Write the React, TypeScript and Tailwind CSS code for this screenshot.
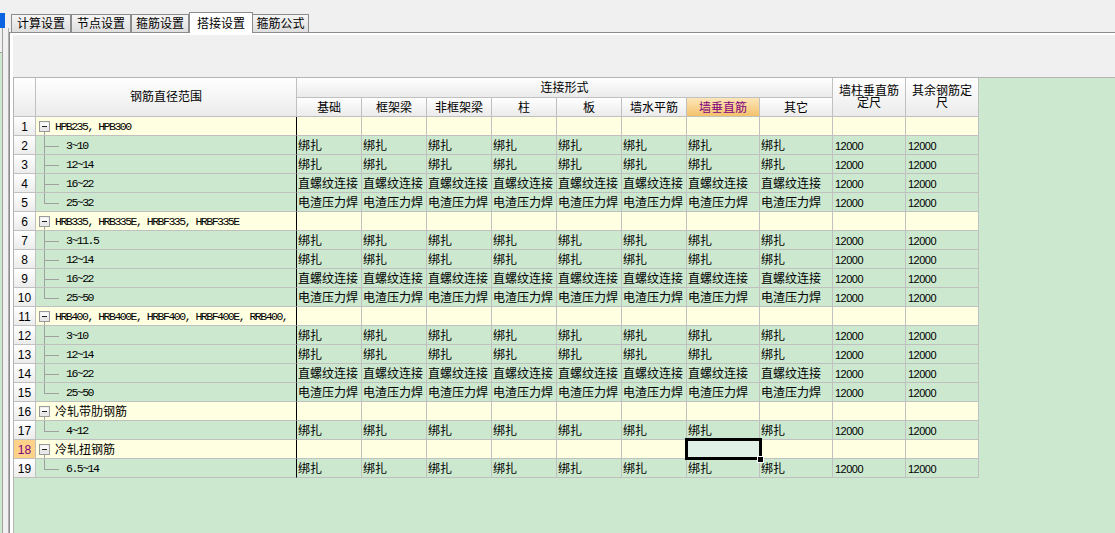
import React from 'react';

type Row =
  | { kind: 'p'; label: string }
  | { kind: 'c'; label: string; vals: string[]; last: boolean };

const groups: { label: string; children: string[] }[] = [
  { label: 'HPB235, HPB300', children: ['3~10', '12~14', '16~22', '25~32'] },
  { label: 'HRB335, HRB335E, HRBF335, HRBF335E', children: ['3~11.5', '12~14', '16~22', '25~50'] },
  { label: 'HRB400, HRB400E, HRBF400, HRBF400E, RRB400,', children: ['3~10', '12~14', '16~22', '25~50'] },
  { label: '冷轧带肋钢筋', children: ['4~12'] },
  { label: '冷轧扭钢筋', children: ['6.5~14'] },
];

function buildRows(): Row[] {
  const out: Row[] = [];
  for (const g of groups) {
    out.push({ kind: 'p', label: g.label });
    g.children.forEach((c, i) => {
      let v = '绑扎';
      if (g.children.length === 4 && i === 2) v = '直螺纹连接';
      if (g.children.length === 4 && i === 3) v = '电渣压力焊';
      out.push({
        kind: 'c',
        label: c,
        vals: [v, v, v, v, v, v, v, v, '12000', '12000'],
        last: i === g.children.length - 1,
      });
    });
  }
  return out;
}

const rows = buildRows();
const subHeads = ['基础', '框架梁', '非框架梁', '柱', '板', '墙水平筋', '墙垂直筋', '其它'];

const hdr = 'bg-linear-to-b from-white to-[#ebebeb] border-r border-b border-[#c0c0c0]';
const mono = "font-['Liberation_Mono',monospace] text-[11.5px] tracking-[-1.5px]";

function MinusBox() {
  return (
    <svg width="19" height="18" className="shrink-0">
      <line x1="8.5" y1="15" x2="8.5" y2="18" stroke="#a0a0a0" />
      <rect x="3.5" y="4.5" width="10" height="10" fill="#e8e8e8" stroke="#9a9a9a" />
      <rect x="4.5" y="5.5" width="8" height="4" fill="#fafafa" />
      <line x1="6" y1="9.5" x2="11" y2="9.5" stroke="#202020" />
    </svg>
  );
}

function TreeLine({ last }: { last: boolean }) {
  return (
    <svg width="30" height="18" className="shrink-0">
      <line x1="8.5" y1="0" x2="8.5" y2={last ? 10 : 18} stroke="#a0a0a0" />
      <line x1="8" y1="10.5" x2="23" y2="10.5" stroke="#a0a0a0" />
    </svg>
  );
}

export default function App() {
  return (
    <div className="w-[1115px] h-[533px] overflow-hidden flex bg-[#f0f0f0] text-black font-['Liberation_Sans','Noto_Sans_CJK_SC',sans-serif] text-[12px]">
      {/* left strip */}
      <div className="w-[9px] shrink-0 flex flex-col">
        <div className="h-[13px]" />
        <div className="w-[5px] h-[15px] bg-[#0a63e0]" />
        <div className="flex-1 flex">
          <div className="w-[3px] flex flex-col border-r border-[#a0a0a0]">
            <div className="h-[24px] bg-[#f0f0f0]" />
            <div className="flex-1 bg-[#cce8cf] border-t border-[#a0a0a0]" />
          </div>
          <div className="flex-1 border-r border-[#b0b0b0]" />
        </div>
      </div>

      {/* main */}
      <div className="flex-1 flex flex-col min-w-0">
        {/* tabs */}
        <div className="h-[32px] flex items-end pl-[2px] shrink-0">
          {[
            ['计算设置', 60],
            ['节点设置', 60],
            ['箍筋设置', 58],
          ].map(([t, w]) => (
            <div
              key={t as string}
              style={{ width: w as number }}
              className="h-[18px] border border-b-0 border-[#8c8c8c] bg-linear-to-b from-[#f6f6f6] to-[#dedede] flex items-center justify-center pt-[1px]"
            >
              {t}
            </div>
          ))}
          <div className="w-[64px] h-[21px] -mb-px relative z-10 border border-b-0 border-[#8c8c8c] bg-white flex items-start justify-center pt-[2px]">
            搭接设置
          </div>
          <div className="w-[56px] h-[18px] border border-b-0 border-l-0 border-[#8c8c8c] bg-linear-to-b from-[#f6f6f6] to-[#dedede] flex items-center justify-center pt-[1px]">
            箍筋公式
          </div>
        </div>

        {/* panel */}
        <div className="flex-1 flex flex-col border-l border-t border-[#8c8c8c] min-h-0">
          <div className="flex-1 flex flex-col border-l-[3px] border-t-2 border-white min-h-0">
            <div className="h-[42px] shrink-0 bg-[#f0f0f0]" />
            <div className="flex-1 bg-[#cce8cf] border-l border-t border-[#b4b4b4] min-h-0">
              <div className="grid w-max grid-cols-[22px_261px_65px_65px_65px_65px_65px_65px_73px_73px_73px_73px] grid-rows-[20px_19px_repeat(19,19px)]">
                {/* header */}
                <div className={`row-span-2 ${hdr}`} />
                <div className={`row-span-2 ${hdr} flex items-center justify-center`}>钢筋直径范围</div>
                <div className={`col-span-8 ${hdr} flex items-center justify-center pt-[1px]`}>连接形式</div>
                <div className={`row-span-2 ${hdr} flex items-center justify-center text-center leading-[12px] pb-[1px]`}>
                  墙柱垂直筋
                  <br />
                  定尺
                </div>
                <div className={`row-span-2 ${hdr} flex items-center justify-center text-center leading-[12px] pb-[1px]`}>
                  其余钢筋定
                  <br />
                  尺
                </div>
                {subHeads.map((h) =>
                  h === '墙垂直筋' ? (
                    <div
                      key={h}
                      className="bg-linear-to-b from-[#fde6b8] to-[#f3c26a] border-r border-b border-[#c0c0c0] flex items-center justify-center text-[#800080] pt-[1px]"
                    >
                      {h}
                    </div>
                  ) : (
                    <div key={h} className={`${hdr} flex items-center justify-center pt-[1px]`}>
                      {h}
                    </div>
                  )
                )}

                {/* body */}
                {rows.map((r, idx) => {
                  const n = idx + 1;
                  const bg = r.kind === 'p' ? 'bg-[#ffffe1]' : 'bg-[#cce8cf]';
                  const sel18 = n === 18;
                  const cells: React.ReactNode[] = [];
                  cells.push(
                    <div
                      key={`n${n}`}
                      className={`border-r border-b border-[#c0c0c0] flex items-center justify-center pt-[1px] ${
                        sel18 ? 'bg-[#ffd28a] text-[#800080]' : 'bg-linear-to-b from-white to-[#ececec]'
                      }`}
                    >
                      {n}
                    </div>
                  );
                  const isLatin = /[A-Za-z0-9]/.test(r.label);
                  cells.push(
                    <div
                      key={`l${n}`}
                      className={`${bg} border-b border-[#c0c0c0] border-r border-r-black flex items-center overflow-hidden whitespace-nowrap`}
                    >
                      {r.kind === 'p' ? <MinusBox /> : <TreeLine last={r.last} />}
                      <span className={`pt-[2px] ${isLatin ? mono : ''}`}>{r.label}</span>
                    </div>
                  );
                  for (let c = 0; c < 10; c++) {
                    const v = r.kind === 'c' ? r.vals[c] : '';
                    const isSel = n === 18 && c === 6;
                    const isNum = c >= 8;
                    cells.push(
                      <div
                        key={`c${n}_${c}`}
                        className={`${isSel ? 'bg-[#e1f0e6] relative' : bg} border-r border-b border-[#c0c0c0] flex items-center whitespace-nowrap overflow-visible ${
                          isNum ? "pl-[2px] pt-[2px] text-[11px] tracking-[-0.5px]" : 'pl-[1px] pt-[2px]'
                        }`}
                      >
                        {v}
                        {isSel && (
                          <>
                            <div className="absolute -left-[2px] -top-[2px] -right-[3px] -bottom-[2px] border-[3px] border-black z-10" />
                            <div className="absolute -right-[5px] -bottom-[5px] w-[7px] h-[7px] bg-black border border-white z-20" />
                          </>
                        )}
                      </div>
                    );
                  }
                  return cells;
                })}
              </div>
            </div>
          </div>
        </div>
      </div>
    </div>
  );
}
